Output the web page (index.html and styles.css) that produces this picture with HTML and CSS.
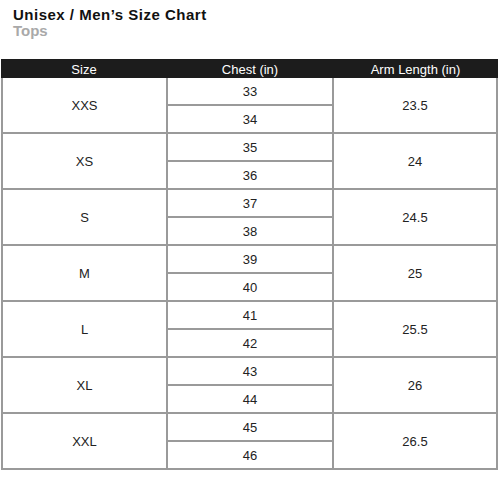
FILE: index.html
```html
<!DOCTYPE html>
<html>
<head>
<meta charset="utf-8">
<link rel="stylesheet" href="styles.css">
</head>
<body>
<div class="titles">
  <div class="title">Unisex / Men’s Size Chart</div>
  <div class="subtitle">Tops</div>
</div>
<div class="chart">
  <div class="head">
    <div>Size</div><div>Chest (in)</div><div>Arm Length (in)</div>
  </div>
  <div class="grid">
    <div class="cell span">XXS</div><div class="cell">33</div><div class="cell span">23.5</div>
    <div class="cell">34</div>
    <div class="cell span">XS</div><div class="cell">35</div><div class="cell span">24</div>
    <div class="cell">36</div>
    <div class="cell span">S</div><div class="cell">37</div><div class="cell span">24.5</div>
    <div class="cell">38</div>
    <div class="cell span">M</div><div class="cell">39</div><div class="cell span">25</div>
    <div class="cell">40</div>
    <div class="cell span">L</div><div class="cell">41</div><div class="cell span">25.5</div>
    <div class="cell">42</div>
    <div class="cell span">XL</div><div class="cell">43</div><div class="cell span">26</div>
    <div class="cell">44</div>
    <div class="cell span">XXL</div><div class="cell">45</div><div class="cell span">26.5</div>
    <div class="cell">46</div>
  </div>
</div>
</body>
</html>
```
FILE: styles.css
```css
html, body {
  margin: 0;
  padding: 0;
  background: #fff;
}
body {
  font-family: "Liberation Sans", Arial, sans-serif;
  width: 500px;
  height: 482px;
  overflow: hidden;
}
.titles {
  padding: 7px 0 0 13px;
  font-weight: bold;
  font-size: 15px;
  line-height: 16px;
}
.title {
  color: #111;
  letter-spacing: 0.5px;
}
.subtitle {
  color: #a9a9a9;
}
.chart {
  margin: 20px 0 0 1px;
  width: 497px;
}
.head {
  display: grid;
  grid-template-columns: 166px 166px 165px;
  height: 19px;
  background: #1c1c1c;
  color: #fff;
  font-size: 13px;
  line-height: 21px;
  text-align: center;
}
.grid {
  display: grid;
  grid-template-columns: 163px 164px 162px;
  grid-auto-rows: 26px;
  gap: 2px;
  padding: 0 2px 2px 2px;
  background: #9a9a9a;
}
.cell {
  background: #fff;
  display: flex;
  align-items: center;
  justify-content: center;
  font-size: 13px;
  color: #222;
}
.span {
  grid-row: span 2;
}
```
